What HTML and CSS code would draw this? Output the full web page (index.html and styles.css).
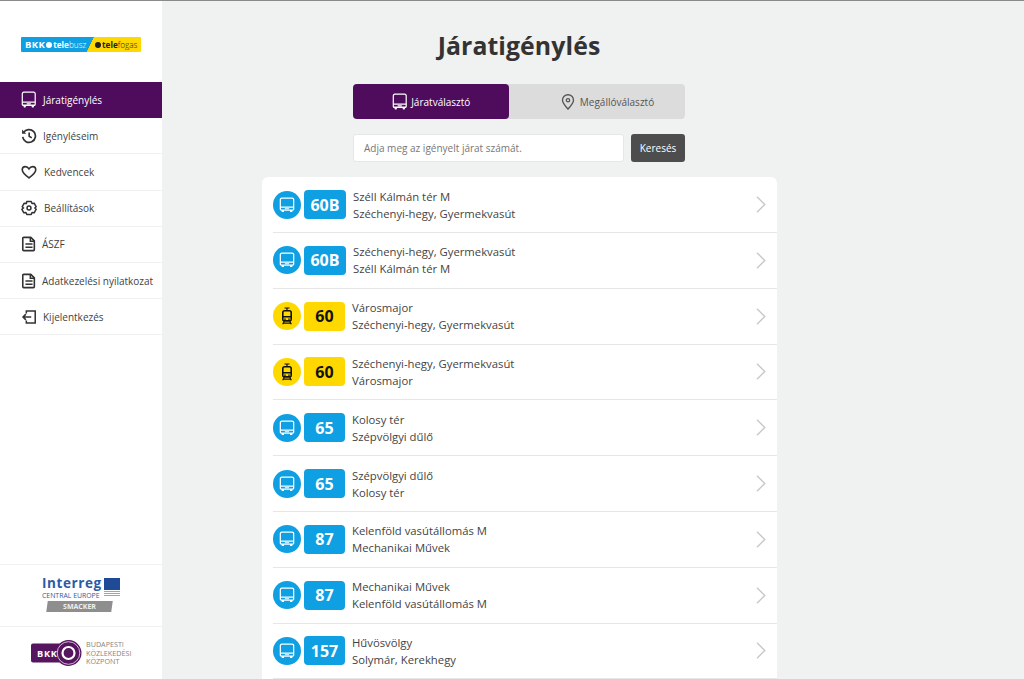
FILE: index.html
```html
<!DOCTYPE html>
<html lang="hu">
<head>
<meta charset="utf-8">
<title>Járatigénylés</title>
<link rel="stylesheet" href="styles.css">
</head>
<body>
<svg class="defs" width="0" height="0" aria-hidden="true">
  <defs>
    <symbol id="bus" viewBox="0 0 18 18" preserveAspectRatio="none">
      <path d="M3.200 1.200h11.600a1.700 1.700 0 0 1 1.700 1.700v10.600a1.200 1.200 0 0 1-1.200 1.200H2.700a1.200 1.200 0 0 1-1.200-1.200V2.900a1.700 1.700 0 0 1 1.700-1.700z" fill="none" stroke="currentColor" stroke-width="1.400"/>
      <path d="M1.500 11.400h15" fill="none" stroke="currentColor" stroke-width="1.400"/>
      <path d="M3 14.700h2.600v1.500a.7.7 0 0 1-.7.7H3.700a.7.7 0 0 1-.7-.7zM12.400 14.700H15v1.500a.7.7 0 0 1-.7.7h-1.200a.7.7 0 0 1-.7-.7zM6.600 12.700h4.800v1.100H6.600z" fill="currentColor"/>
    </symbol>
    <symbol id="tram" viewBox="0 0 18 18">
      <path d="M6.500 1h5M9 1v2.600" fill="none" stroke="currentColor" stroke-width="1.200"/>
      <path d="M6.600 3.800h4.800a1.800 1.800 0 0 1 1.800 1.800v7a1.300 1.300 0 0 1-1.300 1.300H6.100a1.300 1.300 0 0 1-1.300-1.300v-7a1.800 1.800 0 0 1 1.800-1.800z" fill="none" stroke="currentColor" stroke-width="1.600"/>
      <path d="M4.800 9h8.400v1.500H4.800zM6.200 11.400h1.600v1.300H6.200zM10.200 11.400h1.600v1.300h-1.600z" fill="currentColor"/>
      <path d="M6.200 14.200l-1.500 3M11.800 14.200l1.500 3M5.200 16.200h7.600" fill="none" stroke="currentColor" stroke-width="1.200"/>
    </symbol>
    <symbol id="chev" viewBox="0 0 10 17">
      <path d="M1 .8l7.800 7.700L1 16.200" fill="none" stroke="currentColor" stroke-width="1.400"/>
    </symbol>
    <symbol id="doc" viewBox="0 0 18 18">
      <path d="M3 1.500h8l4 4v10a1 1 0 0 1-1 1H3a1 1 0 0 1-1-1v-13a1 1 0 0 1 1-1z" fill="none" stroke="currentColor" stroke-width="1.800" stroke-linejoin="round"/>
      <path d="M10.500 1.500v4.500H15M5 9h8M5 12.700h8" fill="none" stroke="currentColor" stroke-width="1.700"/>
    </symbol>
  </defs>
</svg>
<aside class="sidebar">
  <div class="brand">
    <div class="brand-logo">
      <span class="brand-blue"><b class="bkk-word">BKK</b><i class="dot dot-white"></i><b class="tele">tele</b><span class="thin">busz</span></span>
      <span class="brand-yellow"><i class="dot dot-black"></i><b class="tele">tele</b><span class="thin">fogas</span></span>
    </div>
  </div>
  <nav class="menu">
    <a class="menu-item active"><svg class="mi bus-tall"><use href="#bus"/></svg><span class="ml-a">Járatigénylés</span></a>
    <a class="menu-item"><svg class="mi" viewBox="0 0 18 18"><path d="M2.800 5.400A7.200 7.200 0 1 1 1.900 10" fill="none" stroke="currentColor" stroke-width="1.900"/><path d="M1.200 1.800v4.600h4.600z" fill="currentColor"/><path d="M9.200 5v4.300l2.900 1.800" fill="none" stroke="currentColor" stroke-width="1.900"/></svg><span class="ml-b">Igényléseim</span></a>
    <a class="menu-item"><svg class="mi" viewBox="0 0 18 18"><path d="M9 15.700C4 12.100 1.400 9.500 1.400 6.600 1.400 4.400 3 3 4.900 3 6.500 3 8 3.900 9 5.500 10 3.900 11.500 3 13.100 3c1.900 0 3.500 1.400 3.500 3.600 0 2.900-2.600 5.500-7.600 9.100z" fill="none" stroke="currentColor" stroke-width="1.800"/></svg><span class="ml-c">Kedvencek</span></a>
    <a class="menu-item"><svg class="mi" viewBox="0 0 18 18"><path d="M6.500 1.600h5l.9 2.300 2.400-.3 2.300 4-1.600 1.400 1.600 1.400-2.300 4-2.400-.3-.9 2.300h-5l-.9-2.300-2.400.3-2.300-4L2.900 9 1.300 7.600l2.300-4 2.400.3z" fill="none" stroke="currentColor" stroke-width="1.700" stroke-linejoin="round"/><circle cx="9" cy="9" r="2.200" fill="none" stroke="currentColor" stroke-width="1.700"/></svg><span class="ml-c">Beállítások</span></a>
    <a class="menu-item"><svg class="mi"><use href="#doc"/></svg><span class="ml-d">ÁSZF</span></a>
    <a class="menu-item"><svg class="mi"><use href="#doc"/></svg><span class="ml-d">Adatkezelési nyilatkozat</span></a>
    <a class="menu-item"><svg class="mi" viewBox="0 0 18 18"><path d="M6 5V2.200h10v13.600H6V13" fill="none" stroke="currentColor" stroke-width="1.700"/><path d="M11.500 9H2.500M5.500 5.800L2.300 9l3.200 3.200" fill="none" stroke="currentColor" stroke-width="1.700"/></svg><span class="ml-b">Kijelentkezés</span></a>
  </nav>
  <div class="partners">
    <div class="interreg">
      <div class="ir-top">
        <div class="ir-text"><span class="ir-name">Interreg</span><span class="ir-sub">CENTRAL EUROPE</span></div>
        <div class="ir-right"><span class="eu-flag"></span><span class="eu-lines"></span></div>
      </div>
      <div class="smacker"><span class="smacker-label">SMACKER</span></div>
    </div>
    <div class="bkk">
      <svg class="bkk-mark" viewBox="0 0 52 26" role="img" aria-label="BKK">
        <path d="M3 3.500H29.600A13 13 0 1 1 29.600 22.500H3a2 2 0 0 1-2-2V5.500a2 2 0 0 1 2-2z" fill="#55155f"/>
        <circle cx="38.500" cy="13" r="11.300" fill="none" stroke="#fff" stroke-width=".7"/>
        <circle cx="38.500" cy="13" r="6" fill="none" stroke="#fff" stroke-width="2.200"/>
        <text x="7" y="16.500" class="bkk-letters">BKK</text>
      </svg>
      <div class="bkk-text">BUDAPESTI<br>KÖZLEKEDÉSI<br>KÖZPONT</div>
    </div>
  </div>
</aside>
<main class="content">
  <h1 class="title">Járatigénylés</h1>
  <div class="tabs">
    <div class="tab tab-on"><svg class="tab-icon bus-tall"><use href="#bus"/></svg>Járatválasztó</div>
    <div class="tab tab-off"><svg class="tab-icon" viewBox="0 0 18 18"><path d="M9 17C5.200 12.700 2.800 10 2.800 7a6.200 6.200 0 0 1 12.400 0c0 3-2.400 5.700-6.200 10z" fill="none" stroke="currentColor" stroke-width="1.500"/><circle cx="9" cy="7" r="1.900" fill="none" stroke="currentColor" stroke-width="1.400"/></svg>Megállóválasztó</div>
  </div>
  <div class="search">
    <div class="search-input">Adja meg az igényelt járat számát.</div>
    <div class="search-btn">Keresés</div>
  </div>
  <div class="list">
    <div class="row"><span class="circle blue"><svg class="ri"><use href="#bus"/></svg></span><span class="pill blue wide">60B</span><div class="stops"><span>Széll Kálmán tér M</span><span>Széchenyi-hegy, Gyermekvasút</span></div><svg class="chev"><use href="#chev"/></svg></div>
    <div class="row"><span class="circle blue"><svg class="ri"><use href="#bus"/></svg></span><span class="pill blue wide">60B</span><div class="stops"><span>Széchenyi-hegy, Gyermekvasút</span><span>Széll Kálmán tér M</span></div><svg class="chev"><use href="#chev"/></svg></div>
    <div class="row"><span class="circle yellow"><svg class="ri ri-tram"><use href="#tram"/></svg></span><span class="pill yellow">60</span><div class="stops"><span>Városmajor</span><span>Széchenyi-hegy, Gyermekvasút</span></div><svg class="chev"><use href="#chev"/></svg></div>
    <div class="row"><span class="circle yellow"><svg class="ri ri-tram"><use href="#tram"/></svg></span><span class="pill yellow">60</span><div class="stops"><span>Széchenyi-hegy, Gyermekvasút</span><span>Városmajor</span></div><svg class="chev"><use href="#chev"/></svg></div>
    <div class="row"><span class="circle blue"><svg class="ri"><use href="#bus"/></svg></span><span class="pill blue">65</span><div class="stops"><span>Kolosy tér</span><span>Szépvölgyi dűlő</span></div><svg class="chev"><use href="#chev"/></svg></div>
    <div class="row"><span class="circle blue"><svg class="ri"><use href="#bus"/></svg></span><span class="pill blue">65</span><div class="stops"><span>Szépvölgyi dűlő</span><span>Kolosy tér</span></div><svg class="chev"><use href="#chev"/></svg></div>
    <div class="row"><span class="circle blue"><svg class="ri"><use href="#bus"/></svg></span><span class="pill blue">87</span><div class="stops"><span>Kelenföld vasútállomás M</span><span>Mechanikai Művek</span></div><svg class="chev"><use href="#chev"/></svg></div>
    <div class="row"><span class="circle blue"><svg class="ri"><use href="#bus"/></svg></span><span class="pill blue">87</span><div class="stops"><span>Mechanikai Művek</span><span>Kelenföld vasútállomás M</span></div><svg class="chev"><use href="#chev"/></svg></div>
    <div class="row"><span class="circle blue"><svg class="ri"><use href="#bus"/></svg></span><span class="pill blue">157</span><div class="stops"><span>Hűvösvölgy</span><span>Solymár, Kerekhegy</span></div><svg class="chev"><use href="#chev"/></svg></div>
  </div>
</main>
</body>
</html>
```
FILE: styles.css
```css
* { box-sizing: border-box; }
html, body { height: 100%; }
body {
  margin: 0;
  display: flex;
  height: 679px;
  overflow: hidden;
  background: #f0f1f1;
  border-top: 1px solid #8a8a8a;
  font-family: "Open Sans", sans-serif;
  color: #3c3c3c;
}
.defs { display: block; width: 0; height: 0; overflow: hidden; flex: none; }

/* sidebar */
.sidebar {
  flex: 0 0 162px;
  background: #fff;
  display: flex;
  flex-direction: column;
}
.brand { height: 81px; display: flex; align-items: flex-start; justify-content: center; padding-top: 36px; }
.brand-logo { display: flex; width: 120px; height: 15px; border-radius: 1px; overflow: hidden; font-size: 8.200px; line-height: 15px; white-space: nowrap; }
.brand-blue { flex: 0 0 66px; background: #0f9fe3; color: #fff; padding-left: 4px; display: flex; align-items: center; }
.brand-yellow { flex: 1; background: linear-gradient(116deg, #0f9fe3 0 6px, #ffd800 6.500px); color: #222; padding-left: 7px; display: flex; align-items: center; }
.bkk-word { font-size: 9.500px; letter-spacing: .4px; }
.dot { width: 6px; height: 6px; border-radius: 50%; margin: 0 1px; flex: none; }
.dot-white { background: #fff; }
.dot-black { background: #222; }
.tele { font-weight: 700; }
.thin { font-weight: 300; }

.menu { display: flex; flex-direction: column; }
.menu-item {
  height: 36.200px;
  display: flex;
  align-items: center;
  padding-left: 21px;
  font-size: 10px;
  color: #3f3f3f;
  border-bottom: 1px solid #f0f1f1;
  white-space: nowrap;
}
.menu-item.active { background: #4f0c5c; color: #fff; border-bottom-color: #4f0c5c; }
.mi { width: 16px; height: 16px; flex: none; color: #333; }
.mi.bus-tall { width: 15.500px; height: 17.500px; }
.active .mi { color: #fff; }
.ml-a { margin-left: 6.500px; }
.ml-b { margin-left: 6px; }
.ml-c { margin-left: 7px; }
.ml-d { margin-left: 5px; }

.partners { margin-top: auto; }
.interreg {
  height: 63px;
  border-top: 1px solid #f0f1f1;
  border-bottom: 1px solid #f0f1f1;
  padding: 12px 0 0 42px;
}
.ir-top { display: flex; gap: 2px; }
.ir-text { display: flex; flex-direction: column; width: 60px; }
.ir-name { font-size: 13.500px; line-height: 13px; font-weight: 700; color: #2a5ba6; letter-spacing: .6px; }
.ir-sub { font-size: 6.900px; line-height: 9px; margin-top: 1px; color: #2a5ba6; white-space: nowrap; }
.ir-right { display: flex; flex-direction: column; gap: 1px; padding-top: 1px; }
.eu-flag { width: 16px; height: 12px; background: #1f4a96; }
.eu-lines { width: 16px; height: 6px; background: repeating-linear-gradient(#8fa8cf 0 1px, #fff 1px 2px); }
.smacker {
  width: 65px; height: 11px; margin: 1px 0 0 5px;
  position: relative;
  color: #efefef;
  font-size: 7px; font-weight: 700; line-height: 11px; text-align: center;
}
.smacker::before {
  content: "";
  position: absolute;
  inset: 0;
  background: #8e8e8e;
  transform: skewX(-8deg);
}
.smacker-label { position: relative; }
.bkk { height: 52px; display: flex; align-items: center; padding-left: 30px; gap: 4px; }
.bkk-mark { width: 52px; height: 26px; flex: none; }
.bkk-letters { font: 700 9.200px "Open Sans", sans-serif; fill: #fff; letter-spacing: .8px; }
.bkk-text { font-size: 7.200px; line-height: 8.500px; color: #858585; white-space: nowrap; }

/* main */
.content {
  flex: 1;
  min-width: 0;
  display: flex;
  flex-direction: column;
  align-items: center;
  padding-left: 100px;
  padding-right: 247px;
}
.title { margin: 25px 1px 0 0; font-size: 24.800px; line-height: 38px; font-weight: 700; color: #333; white-space: nowrap; letter-spacing: .1px; }
.tabs {
  margin: 20px 1px 0 0;
  width: 332px;
  height: 35px;
  display: flex;
  background: #dcdcdc;
  border-radius: 4px;
  font-size: 10px;
  color: #555;
  flex: none;
}
.tab { flex: 1; display: flex; align-items: center; justify-content: center; gap: 4px; border-radius: 4px; white-space: nowrap; }
.tab-on { flex: 0 0 156px; background: #4f0c5c; color: #fff; }
.tab-off { padding-left: 20px; }
.tab-icon { width: 16px; height: 16px; flex: none; }
.tab-icon.bus-tall { width: 15.500px; height: 17.500px; }
.search { margin: 15px 1px 0 0; width: 332px; display: flex; gap: 7px; flex: none; }
.search-input {
  flex: 1; height: 28px; background: #fff; border: 1px solid #e6e6e6; border-radius: 3px;
  font-size: 10px; line-height: 26px; padding-left: 10px; color: #777; white-space: nowrap;
}
.search-btn {
  flex: 0 0 54px; height: 28px; background: #4d4d4d; color: #fff; border-radius: 3px;
  font-size: 10px; line-height: 28px; text-align: center;
}
.list {
  margin-top: 15.200px;
  width: 515px;
  background: #fff;
  border-radius: 6px 6px 0 0;
  padding: 0 0 0 11px;
  flex: none;
}
.row {
  height: 55.800px;
  display: flex;
  align-items: center;
  border-bottom: 1px solid #e6e6e6;
}
.circle { width: 28px; height: 28px; border-radius: 50%; display: flex; align-items: center; justify-content: center; flex: none; }
.ri { width: 16px; height: 16px; }
.ri-tram { width: 18px; height: 18px; }
.blue { background: #0f9fe3; color: #fff; }
.yellow { background: #ffd800; color: #111; }
.pill {
  margin-left: 3px; height: 29px; width: 41px; border-radius: 4px;
  display: flex; align-items: center; justify-content: center;
  font-size: 16px; font-weight: 700; flex: none;
}
.wide { width: 42px; }
.stops { margin-left: 7px; display: flex; flex-direction: column; font-size: 11.300px; line-height: 17px; color: #444; white-space: nowrap; }
.chev { width: 10px; height: 17px; color: #c8c8c8; margin-left: auto; margin-right: 11px; flex: none; }
```
